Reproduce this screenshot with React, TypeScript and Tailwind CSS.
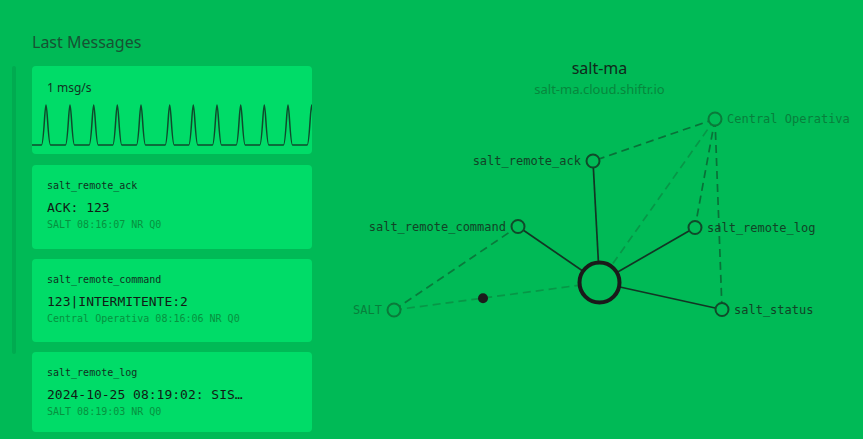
import React from 'react';

const mono = "font-['DejaVu_Sans_Mono','Liberation_Mono',monospace]";

// peaks of the msg/s spark line, x relative to the card
const peaks = [14, 38, 61.7, 85.3, 109, 137.7, 161.3, 185, 208.7, 232.3, 256, 279.7];

const sparkPath = () => {
  let d = 'M0,45';
  peaks.forEach(x => {
    d += ` L${x - 4.5},45 C${x - 2.2},45 ${x - 1.3},5 ${x},5 C${x + 1.3},5 ${x + 2.2},45 ${x + 4.5},45`;
  });
  return d + ' L280,45';
};

const messages = [
  { topic: 'salt_remote_ack', payload: 'ACK: 123', meta: 'SALT 08:16:07 NR Q0', h: 'h-[84px]' },
  { topic: 'salt_remote_command', payload: '123|INTERMITENTE:2', meta: 'Central Operativa 08:16:06 NR Q0', h: 'h-[83px]' },
  { topic: 'salt_remote_log', payload: '2024-10-25 08:19:02: SIS…', meta: 'SALT 08:19:03 NR Q0', h: 'h-[80px]' },
];

type Node = { x: number; y: number; label: string; side: 'start' | 'end'; faded?: boolean };

const nodes: Node[] = [
  { x: 715, y: 119, label: 'Central Operativa', side: 'start', faded: true },
  { x: 593, y: 161, label: 'salt_remote_ack', side: 'end' },
  { x: 518, y: 226.5, label: 'salt_remote_command', side: 'end' },
  { x: 695, y: 227.5, label: 'salt_remote_log', side: 'start' },
  { x: 394, y: 310, label: 'SALT', side: 'end', faded: true },
  { x: 722, y: 309.5, label: 'salt_status', side: 'start' },
];

const hub = { x: 599.5, y: 282.5 };

const Graph: React.FC = () => {
  const [co, ack, cmd, log, salt, status] = nodes;
  return (
    <svg className="absolute inset-0" width="527" height="439" viewBox="336 0 527 439">
      {/* dashed client links */}
      <g fill="none" strokeWidth="1.7" strokeDasharray="8 5">
        <line x1={co.x} y1={co.y} x2={ack.x} y2={ack.y} stroke="#0a6432" strokeOpacity="0.85" />
        <line x1={co.x} y1={co.y} x2={log.x} y2={log.y} stroke="#0a6432" strokeOpacity="0.85" />
        <line x1={co.x} y1={co.y} x2={status.x} y2={status.y} stroke="#0a6432" strokeOpacity="0.85" />
        <line x1={co.x} y1={co.y} x2={hub.x} y2={hub.y} stroke="#0a8a42" strokeOpacity="0.75" />
        <line x1={salt.x} y1={salt.y} x2={cmd.x} y2={cmd.y} stroke="#0a6e36" strokeOpacity="0.85" />
        <line x1={salt.x} y1={salt.y} x2={hub.x} y2={hub.y} stroke="#0a8a42" strokeOpacity="0.75" />
      </g>
      {/* solid topic links */}
      <g stroke="#123524" strokeWidth="1.7">
        {[ack, cmd, log, status].map(n => (
          <line key={n.label} x1={hub.x} y1={hub.y} x2={n.x} y2={n.y} />
        ))}
      </g>
      <circle cx={483} cy={298.3} r={5} fill="#1c1c1c" />
      <circle cx={hub.x} cy={hub.y} r={20} fill="#00ba56" stroke="#1a1a1a" strokeWidth="4" />
      {nodes.map(n => (
        <g key={n.label}>
          <circle
            cx={n.x}
            cy={n.y}
            r={6.5}
            fill="#00ba56"
            stroke={n.faded ? '#0a7a3a' : '#104a2a'}
            strokeWidth="2"
          />
          <text
            x={n.side === 'start' ? n.x + 12 : n.x - 12}
            y={n.y + 4}
            textAnchor={n.side}
            fontSize="12"
            fontFamily="'DejaVu Sans Mono', monospace"
            fill={n.faded ? '#087f3c' : '#124326'}
          >
            {n.label}
          </text>
        </g>
      ))}
    </svg>
  );
};

const App: React.FC = () => {
  return (
    <div className="w-[863px] h-[439px] overflow-hidden bg-[#00ba56] flex font-['Noto_Sans',sans-serif]">
      <div className="w-[312px] shrink-0 flex flex-col">
        <h2 className="pl-8 pt-[31px] h-[66px] text-[16px] leading-[22px] text-[#175233]">Last Messages</h2>
        <div className="flex pl-3">
          <div className="w-1 h-[288px] rounded-sm bg-[#00ab50] shrink-0" />
          <div className="ml-4 w-[280px] flex flex-col gap-[10px]">
            <div className="h-[88px] rounded-sm bg-[#00dc68] flex flex-col mb-px">
              <div className="pl-[15px] pt-[14px] text-[12px] leading-4 text-[#113322]">1 msg/s</div>
              <svg width="280" height="50" className="mt-1">
                <path d={sparkPath()} fill="none" stroke="#0f4a2c" strokeWidth="1.5" strokeLinejoin="round" />
              </svg>
            </div>
            {messages.map(m => (
              <div key={m.topic} className={`${m.h} rounded-sm bg-[#00dc68] pl-[15px] pt-[13px] ${mono}`}>
                <div className="text-[10px] leading-4 text-[#10301f]">{m.topic}</div>
                <div className="mt-1 text-[13px] leading-5 text-[#111b15] whitespace-nowrap">{m.payload}</div>
                <div className="text-[10px] leading-[14px] text-[#07913f]">{m.meta}</div>
              </div>
            ))}
          </div>
        </div>
      </div>
      <div className="ml-6 flex-1 relative">
        <div className="pt-[56px] text-center">
          <div className="text-[16px] leading-6 text-[#10291b]">salt-ma</div>
          <div className="text-[13px] leading-[18px] text-[#07873d]">salt-ma.cloud.shiftr.io</div>
        </div>
        <Graph />
      </div>
    </div>
  );
};

export default App;
